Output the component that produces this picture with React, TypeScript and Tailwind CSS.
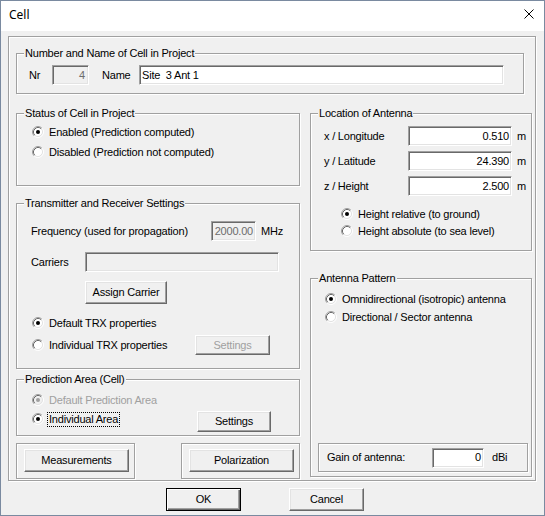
import React from "react";

const etched = "border border-[#a0a0a0] shadow-[inset_1px_1px_0_#fff,1px_1px_0_#fff]";
const sunken =
  "border border-t-[#a0a0a0] border-l-[#a0a0a0] border-r-white border-b-white shadow-[inset_1px_1px_0_#696969,inset_-1px_-1px_0_#e3e3e3]";
const raised =
  "border border-t-white border-l-white border-r-[#696969] border-b-[#696969] shadow-[inset_-1px_-1px_0_#a0a0a0,inset_1px_1px_0_#e3e3e3] bg-[#f0f0f0] flex items-center justify-center";

function Radio({ checked, disabled }: { checked?: boolean; disabled?: boolean }) {
  return (
    <svg width="12" height="12" viewBox="0 0 12 12" className="shrink-0">
      <circle cx="6" cy="6" r="4.5" fill={disabled ? "#f0f0f0" : "#fff"} />
      <path d="M2.11 9.89A5.5 5.5 0 0 1 9.89 2.11" stroke="#a0a0a0" fill="none" />
      <path d="M9.89 2.11A5.5 5.5 0 0 1 2.11 9.89" stroke="#fff" fill="none" />
      <path d="M2.82 9.18A4.5 4.5 0 0 1 9.18 2.82" stroke="#696969" fill="none" />
      <path d="M9.18 2.82A4.5 4.5 0 0 1 2.82 9.18" stroke="#e3e3e3" fill="none" />
      {checked && <circle cx="6" cy="6" r="2" fill={disabled ? "#a0a0a0" : "#000"} />}
    </svg>
  );
}

function RadioRow({
  label,
  checked,
  disabled,
  focus,
  className = "",
}: {
  label: string;
  checked?: boolean;
  disabled?: boolean;
  focus?: boolean;
  className?: string;
}) {
  return (
    <div className={`flex items-center h-[16px] gap-[5px] shrink-0 ${className}`}>
      <Radio checked={checked} disabled={disabled} />
      {focus ? (
        <span className="outline-1 outline-dotted outline-black -ml-[1px] px-[1px]">{label}</span>
      ) : (
        <span className={disabled ? "text-[#a0a0a0]" : ""}>{label}</span>
      )}
    </div>
  );
}

function Group({
  label,
  className = "",
  children,
}: {
  label: string;
  className?: string;
  children?: React.ReactNode;
}) {
  return (
    <div className={`relative shrink-0 ${etched} ${className}`}>
      <span className="absolute -top-[7px] left-[7px] bg-[#f0f0f0] px-[1px] leading-[13px] whitespace-nowrap">
        {label}
      </span>
      {children}
    </div>
  );
}

export default function App() {
  return (
    <div className="w-[545px] h-[516px] border border-[#7a8aa0] bg-[#f0f0f0] flex flex-col text-black font-['Liberation_Sans',Arial,sans-serif] text-[11px] leading-[13px] tracking-[-0.2px] overflow-hidden">
      {/* Title bar */}
      <div className="h-[30px] bg-white flex items-center justify-between pl-[8px] pr-[10px] shrink-0">
        <span className="font-['Noto_Sans',sans-serif] text-[12px] tracking-normal leading-[16px] -mt-[2px]">
          Cell
        </span>
        <svg width="10" height="10" viewBox="0 0 10 10" className="-mt-[4px]">
          <path d="M0.5 0.5L9.5 9.5M9.5 0.5L0.5 9.5" stroke="#000" strokeWidth="1" />
        </svg>
      </div>

      <div className="pl-[7px] pt-[5px]">
        {/* Outer frame */}
        <div className={`${etched} w-[528px] h-[445px] flex flex-col`}>
          <Group label="Number and Name of Cell in Project" className="ml-[7px] mt-[16px] w-[508px] h-[41px]">
            <div className="flex items-center pl-[12px] pt-[11px]">
              <span className="w-[23px]">Nr</span>
              <div className={`${sunken} w-[37px] h-[20px] bg-[#f0f0f0] text-[#6d6d6d] flex items-center justify-end pr-[3px]`}>
                4
              </div>
              <span className="ml-[13px] w-[37px]">Name</span>
              <div className={`${sunken} w-[365px] h-[20px] bg-white flex items-center pl-[2px] whitespace-pre`}>
                Site  3 Ant 1
              </div>
            </div>
          </Group>

          <div className="flex ml-[7px] mt-[19px] gap-[10px]">
            {/* Left column */}
            <div className="w-[284px] flex flex-col">
              <Group label="Status of Cell in Project" className="h-[73px]">
                <div className="flex flex-col gap-[4px] pt-[10px] pl-[15px]">
                  <RadioRow checked label="Enabled (Prediction computed)" />
                  <RadioRow label="Disabled (Prediction not computed)" />
                </div>
              </Group>

              <Group label="Transmitter and Receiver Settings" className="mt-[17px] h-[166px]">
                <div className="flex flex-col pl-[14px] pt-[17px]">
                  <div className="flex items-center h-[20px]">
                    <span className="w-[180px]">Frequency (used for propagation)</span>
                    <div className={`${sunken} w-[45px] h-[20px] bg-[#f0f0f0] text-[#6d6d6d] flex items-center justify-end pr-[2px]`}>
                      2000.00
                    </div>
                    <span className="ml-[5px]">MHz</span>
                  </div>
                  <div className="flex items-center h-[20px] mt-[11px]">
                    <span className="w-[54px]">Carriers</span>
                    <div className={`${sunken} w-[194px] h-[20px] bg-[#f0f0f0]`} />
                  </div>
                  <div className={`${raised} mt-[9px] ml-[54px] w-[82px] h-[23px]`}>Assign Carrier</div>
                  <RadioRow checked label="Default TRX properties" className="mt-[11px] ml-[1px]" />
                  <div className="flex items-center mt-[4px] ml-[1px]">
                    <RadioRow label="Individual TRX properties" className="w-[163px]" />
                    <div className={`${raised} w-[75px] h-[20px] text-[#a0a0a0]`}>Settings</div>
                  </div>
                </div>
              </Group>

              <Group label="Prediction Area (Cell)" className="mt-[10px] h-[57px]">
                <div className="flex flex-col pl-[15px] pt-[12px]">
                  <RadioRow checked disabled label="Default Prediction Area" />
                  <div className="flex items-start mt-[3px]">
                    <RadioRow checked focus label="Individual Area" className="w-[165px]" />
                    <div className={`${raised} w-[74px] h-[21px]`}>Settings</div>
                  </div>
                </div>
              </Group>

              <div className="flex justify-between mt-[7px]">
                <div className={`${etched} w-[119px] h-[36px] pl-[7px] pt-[5px]`}>
                  <div className={`${raised} w-[105px] h-[23px]`}>Measurements</div>
                </div>
                <div className={`${etched} w-[119px] h-[36px] pl-[7px] pt-[5px]`}>
                  <div className={`${raised} w-[105px] h-[23px]`}>Polarization</div>
                </div>
              </div>
            </div>

            {/* Right column */}
            <div className="w-[222px] flex flex-col">
              <Group label="Location of Antenna" className="h-[138px]">
                <div className="flex flex-col pl-[13px] pt-[12px]">
                  <div className="flex flex-col gap-[5px]">
                    {[
                      ["x / Longitude", "0.510"],
                      ["y / Latitude", "24.390"],
                      ["z / Height", "2.500"],
                    ].map(([l, v]) => (
                      <div key={l} className="flex items-center h-[20px]">
                        <span className="w-[84px]">{l}</span>
                        <div className={`${sunken} w-[104px] h-[20px] bg-white flex items-center justify-end pr-[2px]`}>
                          {v}
                        </div>
                        <span className="ml-[5px]">m</span>
                      </div>
                    ))}
                  </div>
                  <div className="flex flex-col gap-[1px] mt-[10px] pl-[17px]">
                    <RadioRow checked label="Height relative (to ground)" />
                    <RadioRow label="Height absolute (to sea level)" />
                  </div>
                </div>
              </Group>

              <Group label="Antenna Pattern" className="mt-[27px] h-[199px] flex flex-col">
                <div className="flex flex-col gap-[2px] pl-[14px] pt-[12px]">
                  <RadioRow checked label="Omnidirectional (isotropic) antenna" />
                  <RadioRow label="Directional / Sector antenna" />
                </div>
                <div className={`${etched} mt-auto mb-[4px] ml-[7px] w-[210px] h-[29px] flex items-center pl-[8px]`}>
                  <span className="w-[105px]">Gain of antenna:</span>
                  <div className={`${sunken} w-[52px] h-[20px] bg-white flex items-center justify-end pr-[2px]`}>0</div>
                  <span className="ml-[8px]">dBi</span>
                </div>
              </Group>
            </div>
          </div>
        </div>

        {/* Bottom buttons */}
        <div className="flex mt-[7px]">
          <div className="ml-[158px] w-[75px] h-[23px] border border-black bg-[#f0f0f0] shadow-[inset_1px_1px_0_#fff,inset_-1px_-1px_0_#696969,inset_-2px_-2px_0_#a0a0a0] flex items-center justify-center">
            OK
          </div>
          <div className={`${raised} ml-[48px] w-[75px] h-[23px]`}>Cancel</div>
        </div>
      </div>
    </div>
  );
}
